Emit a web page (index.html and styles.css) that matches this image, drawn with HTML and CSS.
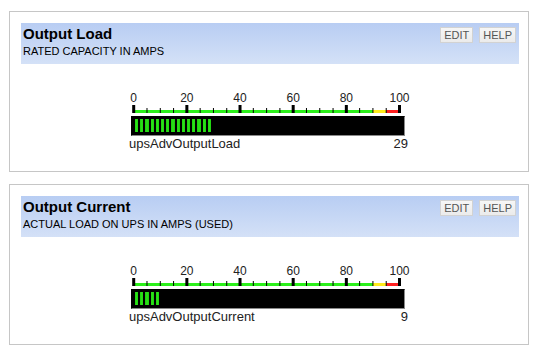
FILE: index.html
```html
<!DOCTYPE html>
<html>
<head>
  <title>UPS Output</title>
  <link rel="stylesheet" href="styles.css">
</head>
<body>

<div class="card">
  <div class="head">
    <div class="titles">
      <h2>Output Load</h2>
      <p>RATED CAPACITY IN AMPS</p>
    </div>
    <div class="btns"><button>EDIT</button><button>HELP</button></div>
  </div>
  <div class="gauge">
    <svg class="scale" width="280" height="24"></svg>
    <div class="bar"><div class="fill" style="width: 76px"></div></div>
    <div class="legend"><span>upsAdvOutputLoad</span><span>29</span></div>
  </div>
</div>

<div class="card">
  <div class="head">
    <div class="titles">
      <h2>Output Current</h2>
      <p>ACTUAL LOAD ON UPS IN AMPS (USED)</p>
    </div>
    <div class="btns"><button>EDIT</button><button>HELP</button></div>
  </div>
  <div class="gauge">
    <svg class="scale" width="280" height="24"></svg>
    <div class="bar"><div class="fill" style="width: 25px"></div></div>
    <div class="legend"><span>upsAdvOutputCurrent</span><span>9</span></div>
  </div>
</div>

<script>
  function pos(v) {
    return 5.7 + v * 2.658;
  }

  function buildScale(svg) {
    var out = "";
    out += '<rect x="' + pos(0) + '" y="20" width="' + (pos(90) - pos(0)) + '" height="3" fill="#2bf01a"/>';
    out += '<rect x="' + pos(90) + '" y="20" width="' + (pos(95) - pos(90)) + '" height="3" fill="#ffec1a"/>';
    out += '<rect x="' + pos(95) + '" y="20" width="' + (pos(100) - pos(95)) + '" height="3" fill="#ff2020"/>';

    for (var v = 0; v <= 100; v += 5) {
      if (v % 20 === 0) {
        out += '<rect x="' + (pos(v) - 1.5) + '" y="15" width="3" height="8" fill="#000"/>';
        out += '<text x="' + pos(v) + '" y="12" text-anchor="middle">' + v + '</text>';
      } else {
        out += '<rect x="' + (pos(v) - 0.5) + '" y="18" width="1" height="5" fill="#000"/>';
      }
    }
    svg.innerHTML = out;
  }

  var scales = document.querySelectorAll(".scale");
  for (var i = 0; i < scales.length; i++) {
    buildScale(scales[i]);
  }
</script>

</body>
</html>
```

FILE: styles.css
```css
body {
  margin: 11px 4px 0 9px;
  background: #fff;
  color: #000;
  font-family: "Liberation Sans", Arial, sans-serif;
}

.card {
  width: 520px;
  box-sizing: border-box;
  border: 1px solid #c6c6c6;
  padding: 11px 9px 20px 11px;
  margin-bottom: 12px;
}

.head {
  display: flex;
  justify-content: space-between;
  height: 41px;
  padding: 1px 3px 0 2px;
  box-sizing: border-box;
  background: linear-gradient(#b8cdf3, #d4e1f7);
}

.head h2 {
  margin: 0;
  font-size: 15px;
  line-height: 19px;
  font-weight: bold;
}

.head p {
  margin: 1px 0 0;
  font-size: 11px;
  line-height: 14px;
}

.btns {
  display: flex;
  gap: 6px;
  margin-top: 3px;
  align-self: flex-start;
}

.btns button {
  height: 16px;
  padding: 0 3px;
  font-family: "Liberation Sans", Arial, sans-serif;
  font-size: 11px;
  line-height: 14px;
  color: #555;
  background: linear-gradient(#f6f6f6, #ebebeb);
  border: 1px solid #d2d2d2;
  border-radius: 0;
}

.gauge {
  width: 280px;
  margin: 26px 0 0 107px;
}

.scale {
  display: block;
  overflow: visible;
  font-family: "Liberation Sans Narrow", "Liberation Sans", sans-serif;
  font-size: 12px;
  fill: #222;
}

.bar {
  width: 274px;
  height: 20px;
  box-sizing: border-box;
  margin: 2px 0 0 3px;
  padding: 2px 2px 3px;
  background: #000;
  border: 1px solid #000;
  border-right-color: #8a8a8a;
  border-bottom-color: #8a8a8a;
}

.fill {
  height: 13px;
  margin-left: 1px;
  background: repeating-linear-gradient(90deg, #1fd10e 0, #2be318 1.6px, #1fd10e 3.2px, transparent 3.2px, transparent 5.2px);
}

.legend {
  display: flex;
  justify-content: space-between;
  padding-left: 1px;
  font-size: 13px;
  line-height: 15px;
  color: #222;
}
```
